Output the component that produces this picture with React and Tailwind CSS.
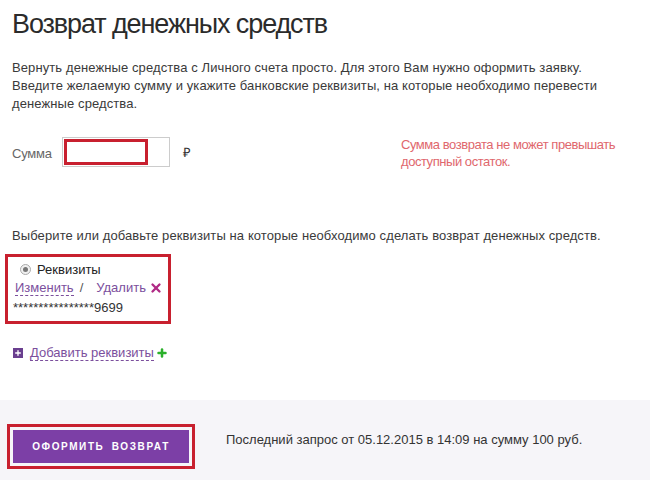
import { X, Plus } from 'lucide-react'

const font = { fontFamily: '"Liberation Sans", Arial, sans-serif' }

const DashedLink = ({ children, className = '' }) => (
  <span className={`text-[#7b4f9d] border-b border-dashed border-[#7b4f9d] leading-[15px] ${className}`}>
    {children}
  </span>
)

export default function App() {
  return (
    <div className="w-[650px] h-[480px] bg-white flex flex-col text-[#333]" style={font}>
      <div className="px-3 pt-[7px] flex-1">
        <h1 className="text-[27px] leading-[34px] tracking-[-1.1px] text-[#2b2b2b] font-normal">Возврат денежных средств</h1>

        <p className="mt-[18px] text-[13px] leading-[18px] tracking-[0.1px] text-[#3a3a3a] w-[620px]">
          Вернуть денежные средства с Личного счета просто. Для этого Вам нужно оформить заявку.
          <br />
          Введите желаемую сумму и укажите банковские реквизиты, на которые необходимо перевести
          <br />
          денежные средства.
        </p>

        <div className="mt-[24px] flex items-start">
          <div className="flex items-center h-[30px]">
            <span className="mt-[4px] text-[13px] tracking-[-0.2px] text-[#666] w-[50px]">Сумма</span>
            <div className="w-[108px] h-[30px] border border-[#ccc] p-[1px]">
              <div className="w-[84px] h-[26px] border-[3px] border-[#c8202f]" />
            </div>
            <span className="ml-[13px] mt-[2px] text-[13px] text-[#333]">₽</span>
          </div>
          <div className="ml-[210px] -mt-[1px] text-[13px] leading-[17px] tracking-[-0.45px] text-[#e0676d]">
            Сумма возврата не может превышать
            <br />
            доступный остаток.
          </div>
        </div>

        <p className="mt-[57px] text-[13px] leading-[18px] tracking-[0.1px] text-[#3a3a3a]">
          Выберите или добавьте реквизиты на которые необходимо сделать возврат денежных средств.
        </p>

        <div className="-ml-[7px] mt-[9px] w-[166px] h-[70px] border-[3px] border-[#c8202f] pl-[5px] pt-[4px] text-[13px]">
          <div className="flex items-center h-[17px] pl-[7px]">
            <span className="w-[11px] h-[11px] rounded-full border border-[#aaa] bg-[#f0f0f0] flex items-center justify-center">
              <span className="w-[5px] h-[5px] rounded-full bg-[#777]" />
            </span>
            <span className="ml-[6px] text-[#222]">Реквизиты</span>
          </div>
          <div className="flex items-center h-[19px]">
            <DashedLink className="ml-[2px]">Изменить</DashedLink>
            <span className="ml-[6px] text-[#555]">/</span>
            <span className="ml-[13px] text-[#7b4f9d]">Удалить</span>
            <X className="ml-[3px] w-[14px] h-[14px] text-[#b02a85]" strokeWidth={4} />
          </div>
          <div className="mt-[1px] text-[13px] text-[#333]">****************9699</div>
        </div>

        <div className="mt-[20px] flex items-center h-[18px] text-[13px]">
          <span className="ml-[1px] w-[10px] h-[10px] bg-[#6a3f8f] flex items-center justify-center">
            <Plus className="w-[8px] h-[8px] text-white" strokeWidth={4} />
          </span>
          <DashedLink className="ml-[7px]">Добавить реквизиты</DashedLink>
          <Plus className="ml-[2px] w-[12px] h-[12px] text-[#2bb02b]" strokeWidth={5} />
        </div>
      </div>

      <div className="h-[80px] bg-[#f6f5f9] flex items-start pl-[7px] pt-[24px]">
        <div className="border-[3px] border-[#c8202f] p-[3px]">
          <button className="w-[176px] h-[33px] bg-[#7c3fa6] text-white text-[10px] font-bold tracking-[1.6px] [word-spacing:3px]">
            ОФОРМИТЬ ВОЗВРАТ
          </button>
        </div>
        <span className="ml-[31px] mt-[6px] text-[13px] text-[#333]">
          Последний запрос от 05.12.2015 в 14:09 на сумму 100 руб.
        </span>
      </div>
    </div>
  )
}
